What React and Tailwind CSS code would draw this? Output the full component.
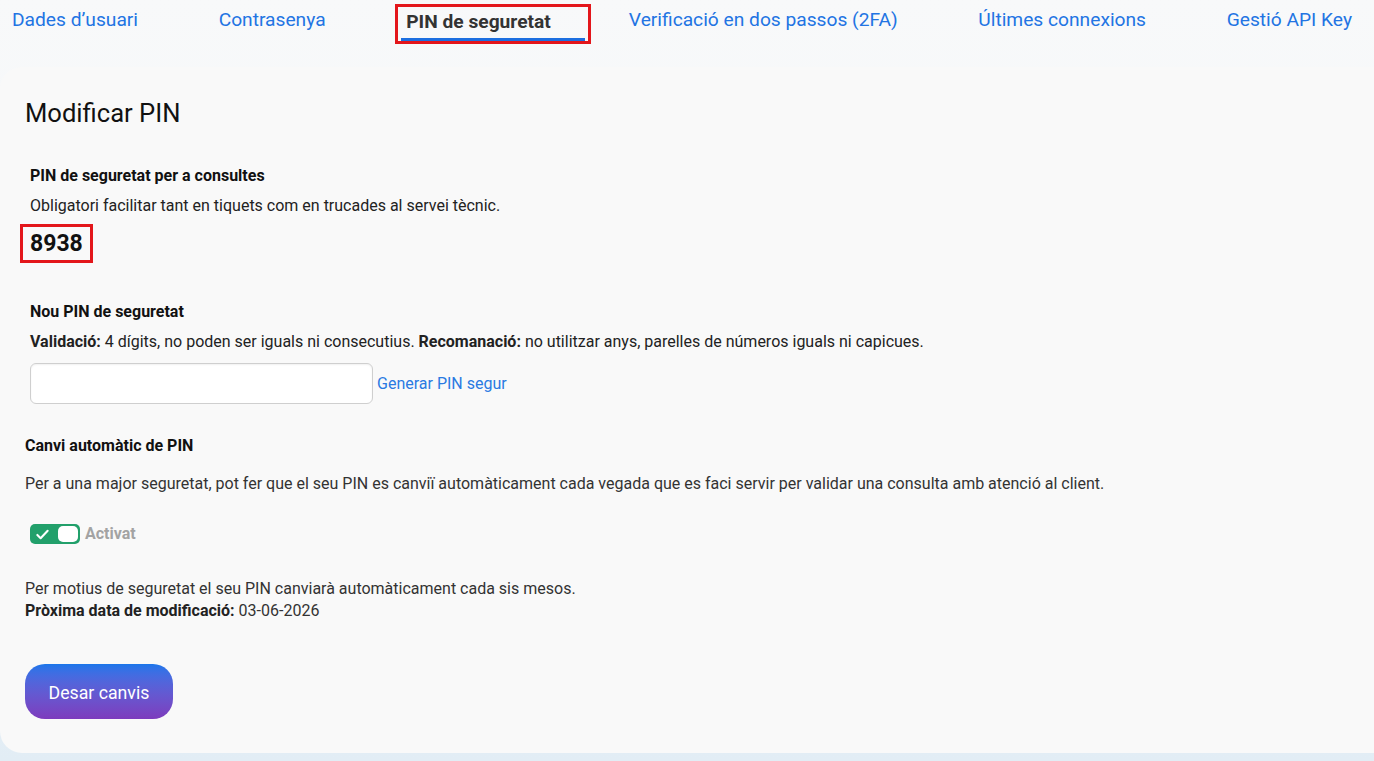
import { useState } from "react";

const tabs = [
  "Dades d’usuari",
  "Contrasenya",
  "PIN de seguretat",
  "Verificació en dos passos (2FA)",
  "Últimes connexions",
  "Gestió API Key",
];

const App = () => {
  const [pin, setPin] = useState("");
  const [autoChange, setAutoChange] = useState(true);
  const active = "PIN de seguretat";

  return (
    <div
      className="min-h-screen w-full bg-gradient-to-b from-[#f8f9fa] via-[#f3f6f9] to-[#e2edf5] text-[#222]"
      style={{ fontFamily: "Roboto, 'Liberation Sans', sans-serif" }}
    >
      {/* Tabs */}
      <nav className="flex items-start justify-between pl-3 pr-[22px] pt-[4px] h-[67px]">
        {tabs.map((tab) =>
          tab === active ? (
            <div
              key={tab}
              className="-ml-[11px] -mr-[43px] w-[196px] border-[3px] border-[#e3161b] px-[3px] h-[40px] flex flex-col"
            >
              <span className="pl-[5px] pt-[3px] text-[19.2px] font-bold text-[#333] leading-[24px] whitespace-nowrap">
                {tab}
              </span>
              <span className="mt-[4px] h-[3px] bg-[#1c6fe0]" />
            </div>
          ) : (
            <a
              key={tab}
              href="#"
              className="pt-[4px] text-[19.2px] leading-[24px] text-[#2274e3] whitespace-nowrap"
            >
              {tab}
            </a>
          )
        )}
      </nav>

      {/* Card */}
      <main className="rounded-l-[22px] bg-[#f9f9f9] pl-[25px] pt-[30px] h-[686px]">
        <h1 className="text-[25.6px] leading-[32px] text-[#111]">Modificar PIN</h1>

        <section className="mt-[37px] pl-[5px]">
          <h2 className="text-[16px] font-bold leading-[20px] text-[#111]">
            PIN de seguretat per a consultes
          </h2>
          <p className="mt-[10px] text-[16px] leading-[20px] text-[#222]">
            Obligatori facilitar tant en tiquets com en trucades al servei tècnic.
          </p>
          <div className="mt-[8px] -ml-[10px] flex w-fit border-[3px] border-[#e3161b] px-[7px] h-[39px] items-center">
            <span className="text-[23px] font-bold leading-[28px] text-[#111]">8938</span>
          </div>
        </section>

        <section className="mt-[39px] pl-[5px]">
          <h2 className="text-[16px] font-bold leading-[20px] text-[#111]">
            Nou PIN de seguretat
          </h2>
          <p className="mt-[10px] text-[16px] leading-[20px] text-[#222]">
            <b>Validació:</b> 4 dígits, no poden ser iguals ni consecutius.{" "}
            <b>Recomanació:</b> no utilitzar anys, parelles de números iguals ni capicues.
          </p>
          <div className="mt-[11px] flex items-center h-[41px]">
            <input
              type="text"
              value={pin}
              onChange={(e) => setPin(e.target.value)}
              className="h-[41px] w-[343px] rounded-[6px] border border-[#cfcfcf] bg-white px-3 text-[16px] shadow-[inset_0_1px_2px_rgba(0,0,0,0.06)] outline-none"
            />
            <a href="#" className="ml-[4px] text-[16px] text-[#2a7ae2]">
              Generar PIN segur
            </a>
          </div>
        </section>

        <section className="mt-[32px]">
          <h2 className="text-[16px] font-bold leading-[20px] text-[#111]">
            Canvi automàtic de PIN
          </h2>
          <p className="mt-[18px] text-[16px] leading-[20px] text-[#333]">
            Per a una major seguretat, pot fer que el seu PIN es canviï automàticament cada
            vegada que es faci servir per validar una consulta amb atenció al client.
          </p>
          <div className="mt-[30px] ml-[5px] flex items-center h-[20px]">
            <button
              onClick={() => setAutoChange(!autoChange)}
              className={`relative h-[20px] w-[50px] rounded-[5px] ${
                autoChange ? "bg-[#22a06b]" : "bg-[#bbb]"
              } flex items-center`}
            >
              {autoChange && (
                <svg viewBox="0 0 16 16" className="absolute left-[5px] h-[15px] w-[15px]">
                  <path
                    d="M2.5 8.5l3.5 3.5 7.5-8"
                    fill="none"
                    stroke="white"
                    strokeWidth="2.2"
                    strokeLinecap="round"
                    strokeLinejoin="round"
                  />
                </svg>
              )}
              <span
                className={`absolute top-[2px] h-[16px] w-[20px] rounded-[5px] bg-white ${
                  autoChange ? "right-[2px]" : "left-[2px]"
                }`}
              />
            </button>
            <span className="ml-[5px] text-[16px] font-bold text-[#a3a3a3]">Activat</span>
          </div>
          <p className="mt-[34px] text-[16px] leading-[22px] text-[#333]">
            Per motius de seguretat el seu PIN canviarà automàticament cada sis mesos.
            <br />
            <b className="text-[#222]">Pròxima data de modificació:</b> 03-06-2026
          </p>
        </section>

        <button className="mt-[42px] h-[55px] w-[148px] rounded-[20px] bg-gradient-to-b from-[#1a76ea] to-[#7d3bbd] pt-[3px] text-[17.7px] text-white">
          Desar canvis
        </button>
      </main>
    </div>
  );
};

export default App;
